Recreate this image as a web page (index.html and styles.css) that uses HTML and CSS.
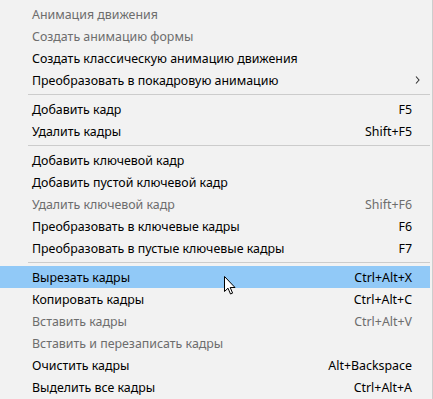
FILE: index.html
```html
<!DOCTYPE html>
<html lang="ru">
<head>
  <meta charset="UTF-8" />
  <title>Контекстное меню кадров</title>
  <link rel="stylesheet" href="styles.css">
</head>
<body>
  <div class="menu">
    <div class="item disabled"><span class="label">Анимация движения</span><span class="key"></span><span class="sub"></span></div>
    <div class="item disabled"><span class="label">Создать анимацию формы</span><span class="key"></span><span class="sub"></span></div>
    <div class="item"><span class="label">Создать классическую анимацию движения</span><span class="key"></span><span class="sub"></span></div>
    <div class="item"><span class="label">Преобразовать в покадровую анимацию</span><span class="key"></span>
      <span class="sub"><svg width="5" height="8" viewBox="0 0 5 8"><path d="M1 0.5 L4 4 L1 7.5" fill="none" stroke="#333" stroke-width="1.1"/></svg></span></div>
    <div class="sep"></div>
    <div class="item"><span class="label">Добавить кадр</span><span class="key">F5</span><span class="sub"></span></div>
    <div class="item"><span class="label">Удалить кадры</span><span class="key">Shift+F5</span><span class="sub"></span></div>
    <div class="sep"></div>
    <div class="item"><span class="label">Добавить ключевой кадр</span><span class="key"></span><span class="sub"></span></div>
    <div class="item"><span class="label">Добавить пустой ключевой кадр</span><span class="key"></span><span class="sub"></span></div>
    <div class="item disabled"><span class="label">Удалить ключевой кадр</span><span class="key">Shift+F6</span><span class="sub"></span></div>
    <div class="item"><span class="label">Преобразовать в ключевые кадры</span><span class="key">F6</span><span class="sub"></span></div>
    <div class="item"><span class="label">Преобразовать в пустые ключевые кадры</span><span class="key">F7</span><span class="sub"></span></div>
    <div class="sep"></div>
    <div class="item active"><span class="label">Вырезать кадры</span><span class="key">Ctrl+Alt+X</span><span class="sub"></span></div>
    <div class="item"><span class="label">Копировать кадры</span><span class="key">Ctrl+Alt+C</span><span class="sub"></span></div>
    <div class="item disabled"><span class="label">Вставить кадры</span><span class="key">Ctrl+Alt+V</span><span class="sub"></span></div>
    <div class="item disabled"><span class="label">Вставить и перезаписать кадры</span><span class="key"></span><span class="sub"></span></div>
    <div class="item"><span class="label">Очистить кадры</span><span class="key">Alt+Backspace</span><span class="sub"></span></div>
    <div class="item"><span class="label">Выделить все кадры</span><span class="key">Ctrl+Alt+A</span><span class="sub"></span></div>

    <svg class="cursor" width="13" height="20" viewBox="0 0 13 20">
      <path d="M0.5 0.5 L0.5 15.5 L4 12.2 L6.5 18 L8.6 17.1 L6.2 11.5 L11 11.5 Z" fill="#fff" stroke="#000" stroke-width="1" stroke-linejoin="miter"/>
    </svg>
  </div>
</body>
</html>
```

FILE: styles.css
```css
body {
  margin: 0;
  background-color: #f2f2f2;
  font-family: "Noto Sans", "Segoe UI", sans-serif;
  font-size: 12.4px;
  color: #000;
}

.menu {
  position: relative;
  width: 430px;
  height: 399px;
  padding: 3px 2px 0 0;
  box-sizing: content-box;
  border-right: 1px solid #cdcdcd;
  background-color: #f2f2f2;
}

.item {
  display: flex;
  align-items: center;
  height: 22px;
  padding-left: 32px;
}

.item.disabled {
  color: #6d6d6d;
}

.item.active {
  background-color: #91c9f7;
}

.label {
  flex: 1;
  white-space: nowrap;
}

.key {
  white-space: nowrap;
}

.sub {
  width: 18px;
  display: flex;
  justify-content: flex-end;
  padding-right: 10px;
  box-sizing: border-box;
}

.sep {
  height: 7px;
  margin-left: 28px;
  display: flex;
  align-items: center;
}

.sep::before {
  content: "";
  flex: 1;
  height: 1px;
  background-color: #cccccc;
}

.cursor {
  position: absolute;
  left: 224px;
  top: 276px;
}
```
